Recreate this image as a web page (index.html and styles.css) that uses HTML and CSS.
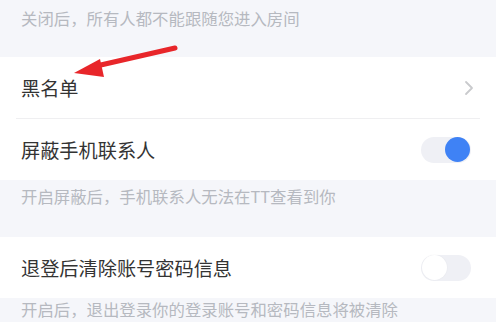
FILE: index.html
```html
<!DOCTYPE html>
<html lang="zh">
<head>
<meta charset="utf-8">
<link rel="stylesheet" href="styles.css">
</head>
<body>
<div class="page">
  <div class="note note-top">关闭后，所有人都不能跟随您进入房间</div>
  <div class="group">
    <div class="row">
      <span class="label">黑名单</span>
      <svg class="chev" width="10" height="16" viewBox="0 0 10 16"><path d="M2 2 L8 8 L2 14" fill="none" stroke="#c9cacd" stroke-width="1.8" stroke-linecap="round" stroke-linejoin="round"/></svg>
    </div>
    <div class="divider"></div>
    <div class="row">
      <span class="label">屏蔽手机联系人</span>
      <span class="toggle on"><span class="knob"></span></span>
    </div>
  </div>
  <div class="note note-mid">开启屏蔽后，手机联系人无法在TT查看到你</div>
  <div class="group">
    <div class="row">
      <span class="label">退登后清除账号密码信息</span>
      <span class="toggle off"><span class="knob"></span></span>
    </div>
  </div>
  <div class="note note-bottom">开启后，退出登录你的登录账号和密码信息将被清除</div>
  <svg class="arrow" width="496" height="100" viewBox="0 0 496 100">
    <line x1="175" y1="48" x2="92" y2="67" stroke="#e8262a" stroke-width="5" stroke-linecap="round"/>
    <polygon points="74,73 100,59 104,77" fill="#e8262a"/>
  </svg>
</div>
</body>
</html>
```
FILE: styles.css
```css
html, body {
  margin: 0;
  padding: 0;
  background: #f5f6fa;
}
.page {
  position: relative;
  width: 496px;
  height: 322px;
  overflow: hidden;
  display: flex;
  flex-direction: column;
  font-family: "Noto Sans CJK SC", "Noto Sans", sans-serif;
}
.note {
  box-sizing: border-box;
  padding-left: 21px;
  font-size: 16.4px;
  line-height: 24px;
  color: #b6b9c0;
  flex: none;
}
.note-top {
  height: 57px;
  padding-top: 6px;
}
.note-mid {
  height: 57px;
  padding-top: 4px;
}
.note-bottom {
  height: 24px;
  padding-top: 2px;
  line-height: 18px;
}
.group {
  background: #ffffff;
  flex: none;
}
.row {
  height: 61px;
  display: flex;
  align-items: center;
  justify-content: space-between;
  padding: 0 25px 0 21px;
}
.label {
  font-size: 19.2px;
  color: #333333;
  line-height: 24px;
}
.divider {
  height: 1px;
  margin: 0 16px;
  background: #efeff1;
}
.chev {
  margin-right: -3px;
}
.toggle {
  width: 50px;
  height: 26px;
  border-radius: 13px;
  background: #eff0f5;
  display: flex;
  align-items: center;
  padding: 0 1px;
  box-sizing: border-box;
}
.toggle.on {
  justify-content: flex-end;
}
.toggle .knob {
  width: 25px;
  height: 25px;
  border-radius: 50%;
}
.toggle.on .knob {
  background: #3f82f5;
}
.toggle.off .knob {
  background: #ffffff;
  box-shadow: 0 0 2px rgba(0,0,0,0.05);
}
.arrow {
  position: absolute;
  left: 0;
  top: 0;
}
```
